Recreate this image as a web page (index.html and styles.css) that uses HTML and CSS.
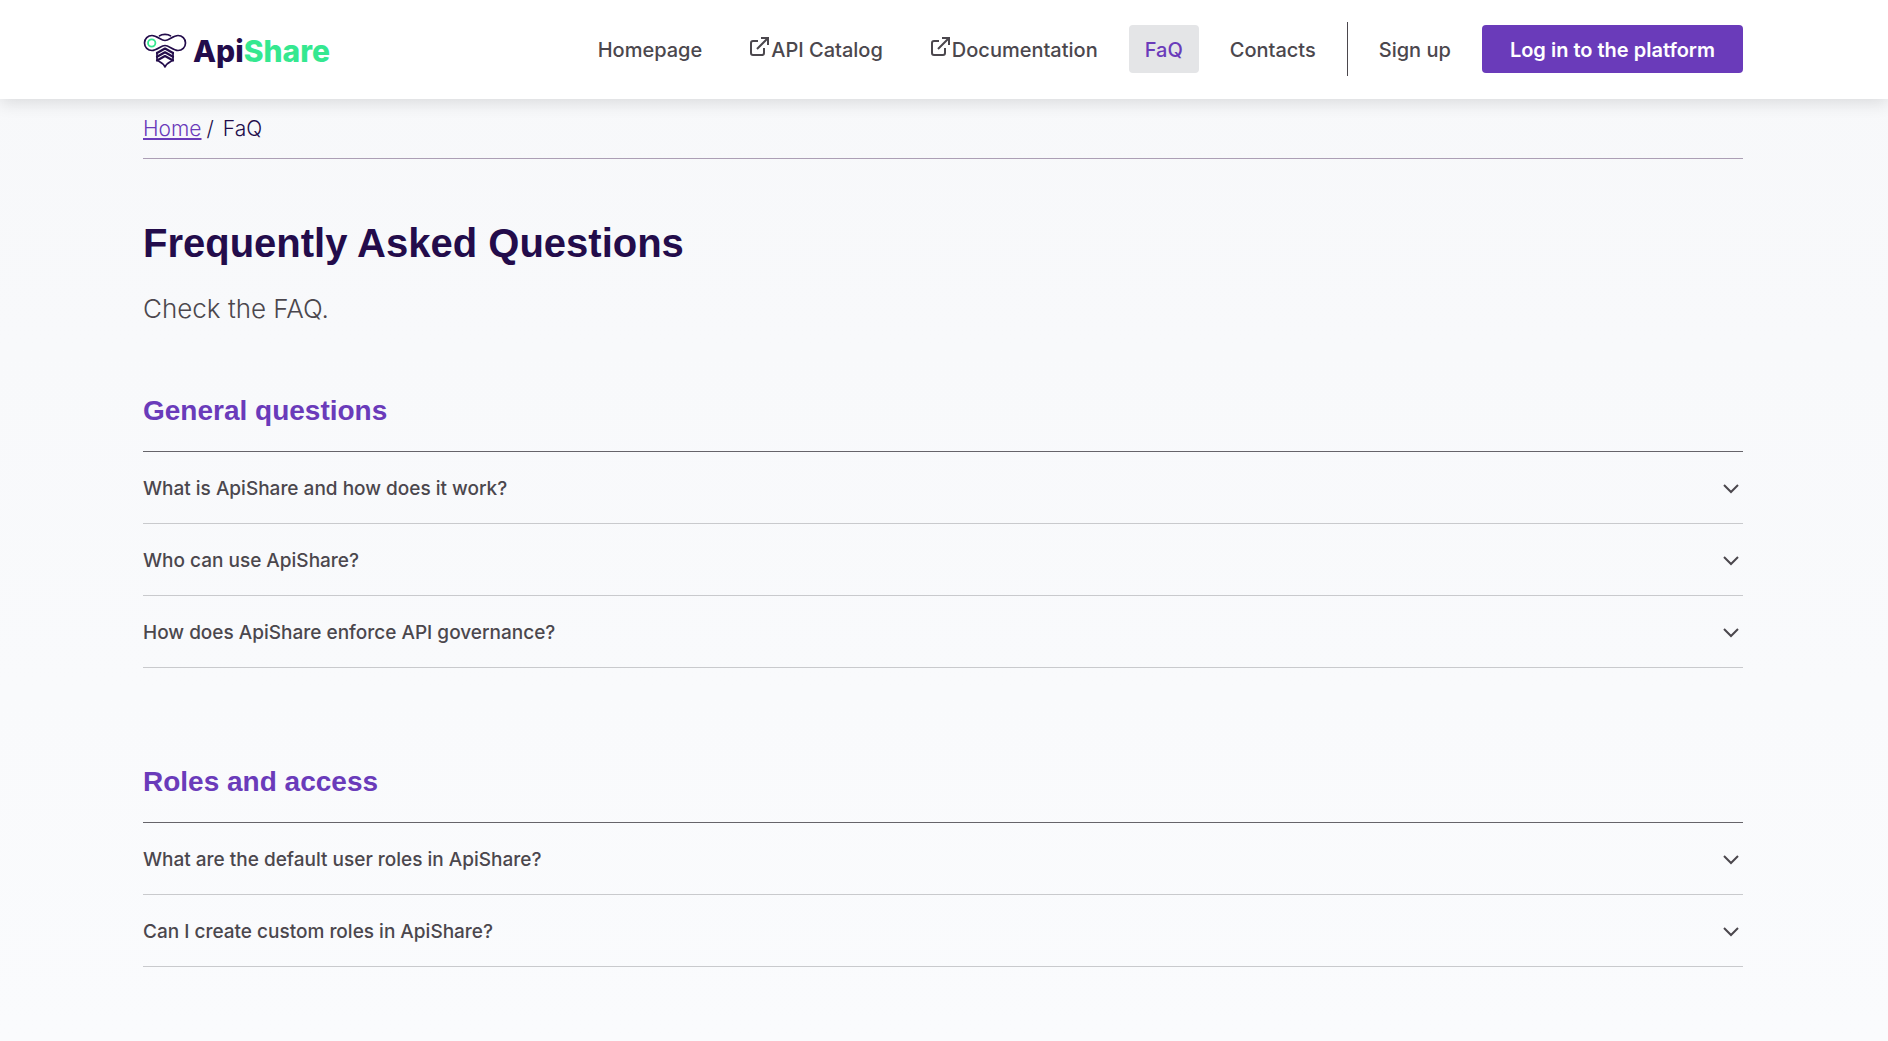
FILE: index.html
```
<!DOCTYPE html>
<html lang="en">
<head>
  <meta charset="UTF-8" />
  <meta name="viewport" content="width=device-width, initial-scale=1" />
  <title>ApiShare - FaQ</title>
  <link rel="stylesheet" href="styles.css">
</head>
<body>
  <header class="header">
    <div class="container header-inner">
      <a class="logo" href="#">
        <svg class="logo-icon" width="44" height="36" viewBox="0 0 44 36" fill="none" stroke="#230c4b" stroke-width="1.7" stroke-linecap="round" stroke-linejoin="round">
          <path d="M22 7.500C18 7.500 14 2.500 9 2.500a7.500 7.500 0 0 0 0 15c5 0 9-5 13-5s8 5 13 5a7.500 7.500 0 0 0 0-15c-5 0-9 5-13 5z" />
          <path d="M16.500 2.800C19 .800 25 .800 27.500 2.800" />
          <path d="M14 19.500V27c2 2 6.500 2.500 8 7 1.500-4.500 6-5 8-7v-7.500" />
          <path d="m14 20 8-4.500 8 4.500M14 23.800l8-4.500 8 4.500M14 27.500l8-4.500 8 4.500" stroke-width="2.200" />
          <circle cx="8.700" cy="10" r="3.700" stroke="#35e890" stroke-width="1.800" />
        </svg>
        <span class="logo-text">Api<span class="logo-accent">Share</span></span>
      </a>

      <nav class="nav">
        <a class="nav-link" href="#">Homepage</a>
        <a class="nav-link" href="#">
          <svg class="ext" width="20" height="20" viewBox="0 0 20 20" fill="none" stroke="currentColor" stroke-width="2"><path d="M9 4H4a2 2 0 0 0-2 2v10a2 2 0 0 0 2 2h9a2 2 0 0 0 2-2v-5M8 12 18 2M12 1h7v7" /></svg>API Catalog</a>
        <a class="nav-link" href="#">
          <svg class="ext" width="20" height="20" viewBox="0 0 20 20" fill="none" stroke="currentColor" stroke-width="2"><path d="M9 4H4a2 2 0 0 0-2 2v10a2 2 0 0 0 2 2h9a2 2 0 0 0 2-2v-5M8 12 18 2M12 1h7v7" /></svg>Documentation</a>
        <a class="nav-link active" href="#">FaQ</a>
        <a class="nav-link" href="#">Contacts</a>
        <span class="divider"></span>
        <a class="nav-link" href="#">Sign up</a>
        <button class="login" type="button">Log in to the platform</button>
      </nav>
    </div>
  </header>

  <main class="container">
    <div class="breadcrumb"><a href="#">Home</a><span class="slash">/</span><span>FaQ</span></div>

    <h1>Frequently Asked Questions</h1>
    <p class="sub">Check the FAQ.</p>

    <section class="faq">
      <h2>General questions</h2>
      <button class="question" type="button">What is ApiShare and how does it work?
        <svg class="chevron" width="16" height="10" viewBox="0 0 16 10"><path d="m1 1 7 7 7-7" /></svg>
      </button>
      <button class="question" type="button">Who can use ApiShare?
        <svg class="chevron" width="16" height="10" viewBox="0 0 16 10"><path d="m1 1 7 7 7-7" /></svg>
      </button>
      <button class="question" type="button">How does ApiShare enforce API governance?
        <svg class="chevron" width="16" height="10" viewBox="0 0 16 10"><path d="m1 1 7 7 7-7" /></svg>
      </button>
    </section>

    <section class="faq">
      <h2>Roles and access</h2>
      <button class="question" type="button">What are the default user roles in ApiShare?
        <svg class="chevron" width="16" height="10" viewBox="0 0 16 10"><path d="m1 1 7 7 7-7" /></svg>
      </button>
      <button class="question" type="button">Can I create custom roles in ApiShare?
        <svg class="chevron" width="16" height="10" viewBox="0 0 16 10"><path d="m1 1 7 7 7-7" /></svg>
      </button>
    </section>
  </main>
</body>
</html>
```
FILE: styles.css
```
*, *::before, *::after { margin: 0; padding: 0; box-sizing: border-box; }

body {
  font-family: Inter, sans-serif;
  font-size: 20px;
  line-height: 24px;
  min-height: 100vh;
  color: #4b474d;
  background: linear-gradient(#f7f8fa, #fafbfd);
}

.container {
  max-width: 1648px;
  margin: 0 auto;
  padding: 0 25px 0 23px;
}

.header {
  background: #fff;
  box-shadow: 0 4px 16px rgba(0, 0, 0, 0.12);
}

.header-inner {
  display: flex;
  align-items: center;
  justify-content: space-between;
  height: 99px;
}

.logo {
  display: flex;
  align-items: center;
  gap: 6px;
  padding-top: 3px;
  text-decoration: none;
}

.logo-text {
  font-size: 30px;
  font-weight: 800;
  line-height: 36px;
  color: #230c4b;
}

.logo-accent { color: #35e890; }

.nav {
  display: flex;
  align-items: center;
  gap: 15px;
  padding-bottom: 2px;
}

.nav-link {
  display: flex;
  align-items: center;
  height: 48px;
  padding: 2px 16px 0;
  border-radius: 4px;
  font-weight: 500;
  color: #4b474d;
  text-decoration: none;
}

.nav-link.active {
  background: #e4e5e7;
  color: #6a3bba;
}

.ext {
  margin: 0 2px 6px 0;
}

.divider {
  width: 1px;
  height: 54px;
  background: #4b474d;
}

.login {
  height: 48px;
  padding: 2px 28px 0;
  border: none;
  border-radius: 4px;
  font: inherit;
  font-weight: 600;
  background: #6a3bba;
  color: #fff;
  cursor: pointer;
}

.breadcrumb {
  display: flex;
  gap: 5px;
  height: 60px;
  padding-top: 18px;
  border-bottom: 1px solid #ac9fb5;
  font-size: 21px;
  font-weight: 300;
  color: #230c4b;
}

.breadcrumb a { color: #6a3bba; }

.slash { padding-right: 4px; }

h1 {
  margin-top: 60px;
  font-family: "Liberation Sans", Arial, sans-serif;
  font-size: 40px;
  line-height: 48px;
  color: #230c4b;
}

.sub {
  margin-top: 24px;
  font-size: 26px;
  font-weight: 300;
  line-height: 36px;
}

.faq { padding-top: 66px; }

.faq + .faq { padding-top: 96px; }

h2 {
  padding-bottom: 22px;
  border-bottom: 1px solid #66646a;
  font-family: "Liberation Sans", Arial, sans-serif;
  font-size: 28px;
  line-height: 36px;
  color: #6a3bba;
}

.question {
  display: flex;
  align-items: center;
  justify-content: space-between;
  width: 100%;
  height: 72px;
  padding: 2px 4px 0 0;
  border: none;
  border-bottom: 1px solid #c9cacd;
  background: none;
  font: inherit;
  font-size: 19px;
  font-weight: 500;
  color: #4b474d;
  text-align: left;
  cursor: pointer;
}

.chevron {
  fill: none;
  stroke: #4b474d;
  stroke-width: 2;
}
```
